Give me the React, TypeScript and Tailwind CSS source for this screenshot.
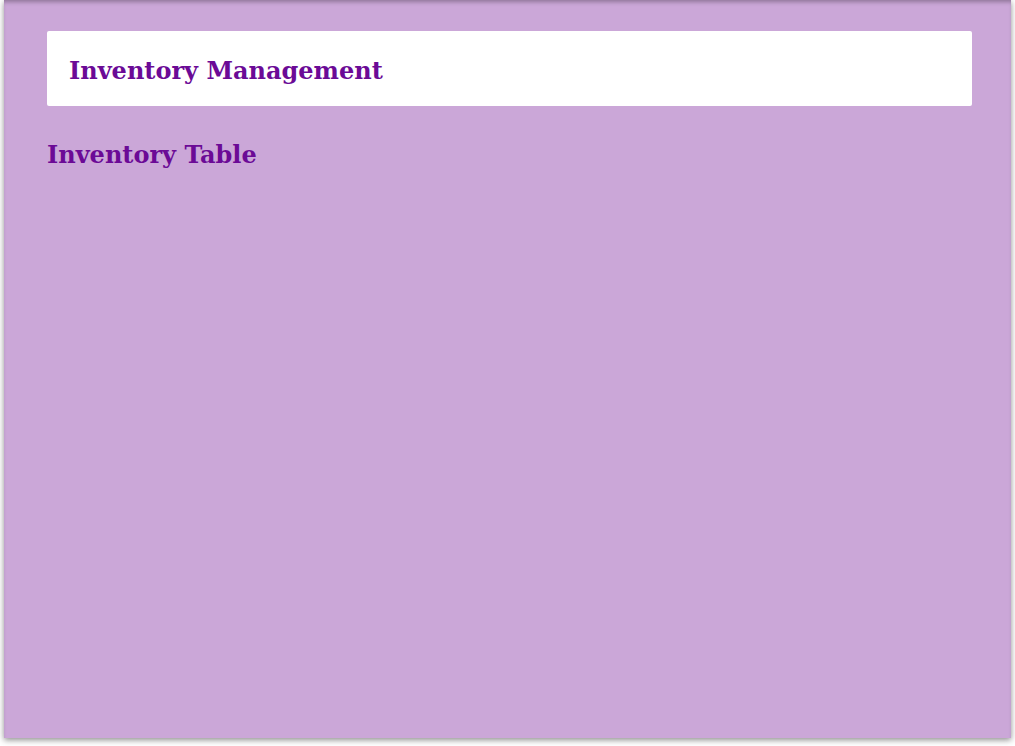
export default function App() {
  return (
    <div className="h-[746px] w-[1015px] bg-white">
      <div
        className="ml-[4px] flex h-[738px] w-[1007px] flex-col bg-[#cba7d8] pl-[43px] pr-[39px] pt-[31px] shadow-[0_2px_6px_rgba(0,0,0,0.45),inset_0_4px_4px_-2px_rgba(0,0,0,0.3)]"
        style={{ fontFamily: '"DejaVu Serif", serif' }}
      >
        <header className="flex h-[75px] items-center rounded-[2px] bg-white px-[22px] pt-[4px]">
          <h1 className="text-[24px] font-bold text-[#6b0a96]">Inventory Management</h1>
        </header>
        <h2 className="mt-[31px] text-[24px] font-bold text-[#6b0a96]">Inventory Table</h2>
      </div>
    </div>
  )
}
